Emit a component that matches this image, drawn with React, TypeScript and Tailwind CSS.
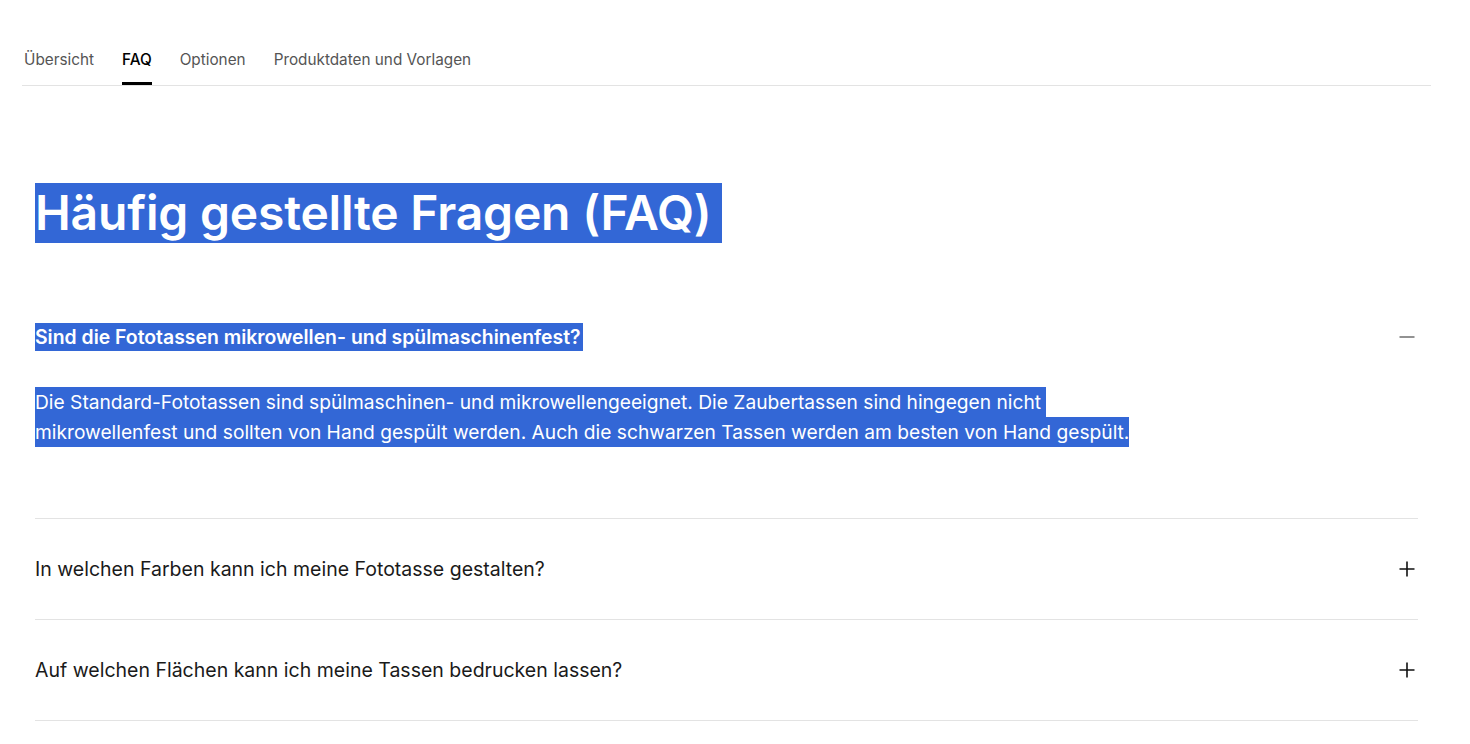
import React from "react";

const Plus = () => (
  <svg width="16" height="16" viewBox="0 0 16 16" fill="none">
    <path d="M8 0.5V15.5M0.5 8H15.5" stroke="#111" strokeWidth="1.6" />
  </svg>
);

const Minus = () => (
  <svg width="16" height="16" viewBox="0 0 16 16" fill="none">
    <path d="M0.5 8H15.5" stroke="#777" strokeWidth="1.6" />
  </svg>
);

export default function App() {
  const tabs = ["Übersicht", "FAQ", "Optionen", "Produktdaten und Vorlagen"];
  const hl = "bg-[#3367d6] text-white";
  return (
    <div className="min-h-screen bg-white" style={{ fontFamily: "Inter, 'Noto Sans', sans-serif" }}>
      <nav className="ml-[22px] w-[1409px] flex gap-[28px] pl-[2px] border-b border-[#e3e3e3]">
        {tabs.map((t) => (
          <div
            key={t}
            className={
              "pt-[49px] pb-[11px] text-[15.3px] leading-[22px] border-b-[3px] " +
              (t === "FAQ" ? "border-black text-black font-medium" : "border-transparent text-[#555]")
            }
          >
            {t}
          </div>
        ))}
      </nav>

      <main className="ml-[35px] w-[1383px]">
        <h2 className="mt-[97px] text-[48px] leading-[60px] font-semibold tracking-[-0.2px]">
          <span className={"inline-block pr-[10px] " + hl}>Häufig gestellte Fragen (FAQ)</span>
        </h2>

        <div className="mt-[80px] flex items-center justify-between pr-[3px]">
          <span className={"text-[19.4px] leading-[28px] font-semibold pr-[2px] " + hl}>
            Sind die Fototassen mikrowellen- und spülmaschinenfest?
          </span>
          <Minus />
        </div>

        <div className="mt-[36px] text-[19.2px] leading-[30px]">
          <span className={"block w-fit pr-[5px] " + hl}>
            Die Standard-Fototassen sind spülmaschinen- und mikrowellengeeignet. Die Zaubertassen sind hingegen nicht
          </span>
          <span className={"block w-fit " + hl}>
            mikrowellenfest und sollten von Hand gespült werden. Auch die schwarzen Tassen werden am besten von Hand gespült.
          </span>
        </div>

        <div className="mt-[71px] border-t border-[#e3e3e3]">
          {[
            "In welchen Farben kann ich meine Fototasse gestalten?",
            "Auf welchen Flächen kann ich meine Tassen bedrucken lassen?",
          ].map((q) => (
            <div key={q} className="h-[101px] flex items-center justify-between pr-[3px] border-b border-[#e3e3e3]">
              <span className="text-[19.5px] leading-[28px] text-[#1a1a1a]">{q}</span>
              <Plus />
            </div>
          ))}
        </div>
      </main>
    </div>
  );
}
